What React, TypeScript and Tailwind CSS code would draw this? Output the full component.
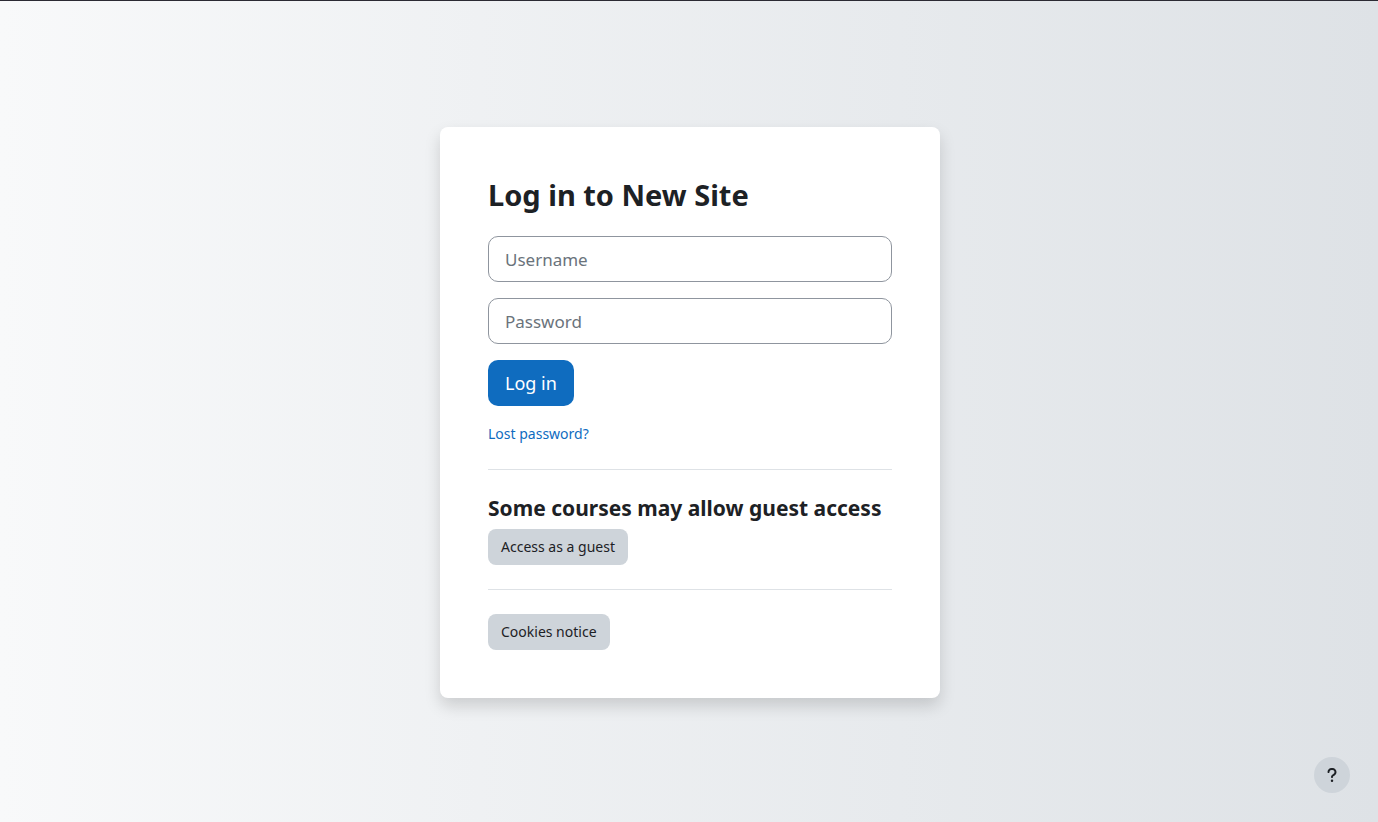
import { useState } from "react";
import { FaQuestion } from "react-icons/fa6";

const inputClass =
  "h-[46px] w-full rounded-[10px] border border-[#8f959e] bg-white px-4 text-[17px] text-[#1d2125] placeholder:text-[#6a737b] focus:border-[#0f6cbf] focus:outline-none";

const secondaryButtonClass =
  "h-9 rounded-lg bg-[#ced4da] px-[13px] text-sm text-[#1d2125] hover:bg-[#b8bfc6]";

export default function App() {
  const [username, setUsername] = useState("");
  const [password, setPassword] = useState("");

  return (
    <div className="flex min-h-screen flex-col items-center justify-center border-t border-[#2b2a33] bg-linear-to-r/srgb from-[#f8f9fa] to-[#dee2e6] pt-0.5 pl-0.5 font-['Noto_Sans','Open_Sans',sans-serif] text-[#1d2125]">
      <main className="w-full max-w-[500px] rounded-lg bg-white p-12 shadow-[0_8px_16px_rgba(0,0,0,0.15)]">
        <h1 className="mb-[21px] text-[29px] leading-10 font-bold">Log in to New Site</h1>

        <form onSubmit={(event) => event.preventDefault()} className="flex flex-col items-start gap-4">
          <input
            type="text"
            aria-label="Username"
            placeholder="Username"
            autoComplete="username"
            value={username}
            onChange={(event) => setUsername(event.target.value)}
            className={inputClass}
          />
          <input
            type="password"
            aria-label="Password"
            placeholder="Password"
            autoComplete="current-password"
            value={password}
            onChange={(event) => setPassword(event.target.value)}
            className={inputClass}
          />
          <button
            type="submit"
            className="h-[46px] rounded-[10px] bg-[#0f6cbf] px-[17px] text-lg text-white hover:bg-[#0c5699]"
          >
            Log in
          </button>
          <a href="#" className="text-sm leading-[23px] text-[#0f6cbf] hover:underline">
            Lost password?
          </a>
        </form>

        <hr className="my-6 border-[#dee2e6]" />

        <h2 className="mb-[7px] text-[21px] leading-7 font-bold">Some courses may allow guest access</h2>
        <button type="button" className={secondaryButtonClass}>
          Access as a guest
        </button>

        <hr className="my-6 border-[#dee2e6]" />

        <button type="button" className={secondaryButtonClass}>
          Cookies notice
        </button>
      </main>

      <button
        type="button"
        aria-label="Show footer"
        className="fixed right-7 bottom-[29px] flex size-9 items-center justify-center rounded-full bg-[#ced4da]"
      >
        <FaQuestion className="size-4" />
      </button>
    </div>
  );
}
